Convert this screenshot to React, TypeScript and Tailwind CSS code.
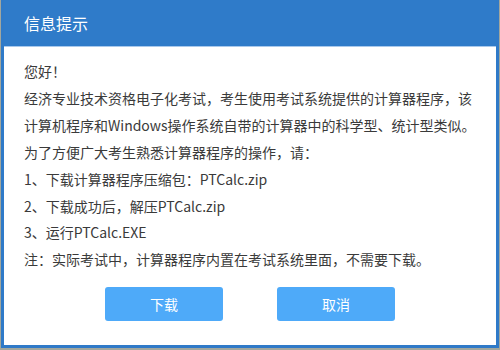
export default function App() {
  const lines = [
    '您好！',
    '经济专业技术资格电子化考试，考生使用考试系统提供的计算器程序，该',
    '计算机程序和Windows操作系统自带的计算器中的科学型、统计型类似。',
    '为了方便广大考生熟悉计算器程序的操作，请：',
    '1、下载计算器程序压缩包：PTCalc.zip',
    '2、下载成功后，解压PTCalc.zip',
    '3、运行PTCalc.EXE',
    '注：实际考试中，计算器程序内置在考试系统里面，不需要下载。',
  ]

  return (
    <div
      className="w-[500px] h-[350px] bg-[#a2a79e] pl-[1px]"
      style={{ fontFamily: '"Noto Sans CJK SC", "Noto Sans", sans-serif' }}
    >
      <div className="w-[498px] h-[348px] border-[3px] border-t-0 border-[#2f7ac8] bg-white flex flex-col">
        <div className="h-[47px] bg-[#2f7bc9] flex items-center pl-[20px] text-white text-[16px] border-b border-[#a9c9ec]">
          信息提示
        </div>
        <div className="pl-[20px] pt-[11px] text-[14px] leading-[26.9px] text-[#3a3a3a]">
          {lines.map((l) => (
            <div key={l} className="whitespace-nowrap">
              {l}
            </div>
          ))}
        </div>
        <div className="flex justify-center gap-[54px] mt-[14px]">
          <button className="w-[118px] h-[34px] rounded-[3px] bg-[#4eaaf9] text-white text-[14px]">
            下载
          </button>
          <button className="w-[118px] h-[34px] rounded-[3px] bg-[#4eaaf9] text-white text-[14px]">
            取消
          </button>
        </div>
      </div>
    </div>
  )
}
